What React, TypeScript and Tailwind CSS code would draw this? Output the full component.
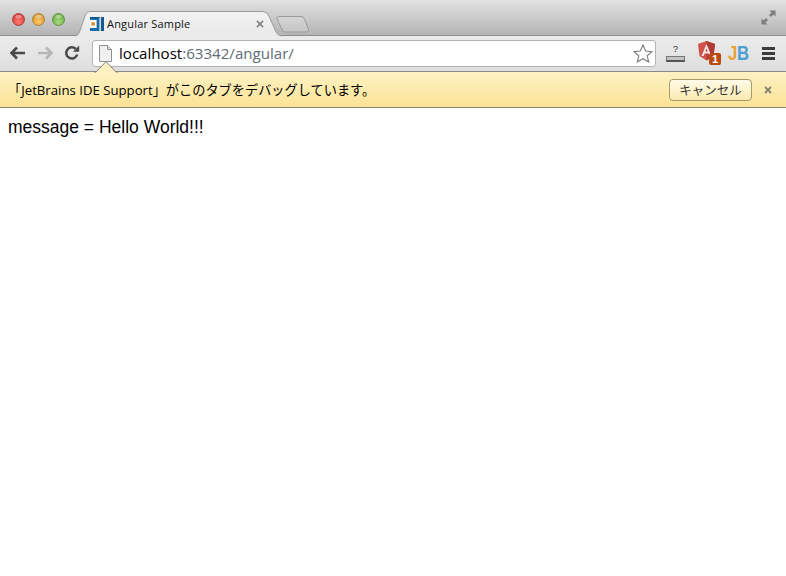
import React from "react";

function Light({ c1, c2, b }: { c1: string; c2: string; b: string }) {
  return (
    <svg width="13" height="13" viewBox="0 0 13 13">
      <defs>
        <radialGradient id={"g" + b.slice(1)} cx="50%" cy="70%" r="60%">
          <stop offset="0%" stopColor={c1} />
          <stop offset="100%" stopColor={c2} />
        </radialGradient>
      </defs>
      <circle cx="6.5" cy="6.5" r="6" fill={"url(#g" + b.slice(1) + ")"} stroke={b} strokeWidth="0.9" />
      <ellipse cx="6.5" cy="3.6" rx="3.2" ry="1.8" fill="#fff" opacity="0.35" />
    </svg>
  );
}

function TabShape() {
  return (
    <svg className="absolute left-[75px] top-[10px]" width="240" height="27" viewBox="0 0 240 27">
      <defs>
        <linearGradient id="tab" x1="0" y1="0" x2="0" y2="1">
          <stop offset="0%" stopColor="#f2f2f2" />
          <stop offset="100%" stopColor="#e9e9e9" />
        </linearGradient>
        <linearGradient id="ntab" x1="0" y1="0" x2="0" y2="1">
          <stop offset="0%" stopColor="#d6d6d6" />
          <stop offset="100%" stopColor="#c4c4c4" />
        </linearGradient>
      </defs>
      <path d="M204 6.5 H226 Q228.5 6.5 229.5 9 L233.5 19.5 Q234.2 22 231.5 22 H210 Q208 22 207 19.5 L202 9 Q201.5 6.5 204 6.5 Z" fill="url(#ntab)" stroke="#9c9c9c" />
      <path d="M0 26 Q3 26 4.5 22 L10 6 Q11 1.5 16 1.5 H188 Q192 1.5 194 6 L201 22 Q203 26 207 26" fill="url(#tab)" stroke="#9a9a9a" />
    </svg>
  );
}

function FavJ() {
  return (
    <svg width="14" height="14" viewBox="0 0 14 14">
      <rect x="0" y="0" width="14" height="14" fill="#fff" />
      <path d="M0 0 H9.5 V14 H0 V11 H6.6 V3 H0 Z" fill="#1a6ca6" />
      <rect x="0" y="0" width="9.5" height="1.2" fill="#0f4f80" />
      <rect x="1.4" y="5.2" width="3.4" height="3.4" fill="#d98a2b" />
      <rect x="10.8" y="0" width="3.2" height="14" fill="#14598f" />
    </svg>
  );
}

function Angular() {
  return (
    <div className="relative w-[26px] h-[26px]">
      <svg className="absolute left-0 top-0" width="19" height="20" viewBox="0 0 18 20">
        <path d="M9 0 L17.5 3 L16 15 L9 19.5 L2 15 L0.5 3 Z" fill="#d0524b" />
        <path d="M9 0 L17.5 3 L16 15 L9 19.5 Z" fill="#b03a34" />
        <path d="M9 3 L4 15 H6 L7 12.4 H11 L12 15 H14 Z M7.8 10.6 L9 7.5 L10.2 10.6 Z" fill="#f6e8e6" fillRule="evenodd" />
      </svg>
      <div className="absolute left-[12px] top-[12px] w-[12px] h-[12px] bg-[#bb4a10] rounded-[2px] text-white text-[11px] font-bold leading-[12px] text-center font-['Liberation_Sans',sans-serif]">
        1
      </div>
    </div>
  );
}

export default function App() {
  return (
    <div className="relative w-[786px] h-[576px] overflow-hidden bg-white flex flex-col font-['Liberation_Sans',sans-serif]">
      <div className="h-[36px] shrink-0 flex items-start justify-between bg-gradient-to-b from-[#e2e2e2] to-[#b4b4b4] border-b border-[#8e8e8e]">
        <div className="flex items-center gap-[7px] pl-[12px] pt-[13px]">
          <Light c1="#ff7a70" c2="#d8423c" b="#a83a36" />
          <Light c1="#ffc864" c2="#d99a34" b="#a87a30" />
          <Light c1="#a8dc7c" c2="#6fb04a" b="#5c9040" />
        </div>
        <svg className="mr-[10px] mt-[10px]" width="15" height="15" viewBox="0 0 16 16" fill="#7d7d7d">
          <path d="M9 0.5 H15.5 V7 L13.2 4.8 L10.6 7.4 L8.6 5.4 L11.2 2.8 Z" />
          <path d="M0.5 15.5 V9 L2.8 11.2 L5.4 8.6 L7.4 10.6 L4.8 13.2 L7 15.5 Z" />
        </svg>
      </div>

      <TabShape />
      <div className="absolute left-[90px] top-[17px] flex items-center gap-[3px] w-[174px]">
        <FavJ />
        <span className="text-[11px] text-[#111] tracking-[0.2px] leading-[14px] font-['Open_Sans',sans-serif]">Angular Sample</span>
        <svg className="ml-auto" width="8" height="8" viewBox="0 0 9 9" stroke="#808080" strokeWidth="1.7">
          <path d="M1 1 L8 8 M8 1 L1 8" />
        </svg>
      </div>

      <div className="h-[36px] shrink-0 flex items-center bg-gradient-to-b from-[#ececec] to-[#dedede] border-b border-[#8a8a8a] pb-[1px]">
        <svg className="ml-[9px]" width="17" height="14" viewBox="0 0 17 14" fill="none" stroke="#4a4a4a" strokeWidth="2.6">
          <path d="M16 7 H3 M8 1.5 L2.5 7 L8 12.5" />
        </svg>
        <svg className="ml-[11px]" width="17" height="14" viewBox="0 0 17 14" fill="none" stroke="#b6b6b6" strokeWidth="2.6">
          <path d="M1 7 H14 M9 1.5 L14.5 7 L9 12.5" />
        </svg>
        <svg className="ml-[10px]" width="16" height="16" viewBox="0 0 16 16" fill="none">
          <path d="M13.2 9.5 A5.6 5.6 0 1 1 11.8 4" stroke="#4a4a4a" strokeWidth="2.5" />
          <path d="M9 6.8 H15.2 V0.6 Z" fill="#4a4a4a" />
        </svg>
        <div className="ml-[12px] w-[564px] h-[27px] bg-white border border-[#b4b4b4] rounded-[3px] flex items-center">
          <svg className="ml-[6px]" width="13" height="17" viewBox="0 0 13 17">
            <path d="M0.5 0.5 H8.5 L12.5 4.5 V16.5 H0.5 Z" fill="#f0f0f0" stroke="#8f8f8f" />
            <path d="M8.5 0.5 V4.5 H12.5" fill="#dcdcdc" stroke="#8f8f8f" />
          </svg>
          <span className="ml-[7px] text-[15.1px] leading-[20px] text-black font-['Open_Sans',sans-serif]">
            localhost<span className="text-[#5f6b75]">:63342/angular/</span>
          </span>
          <svg className="ml-auto mr-[2px]" width="20" height="19" viewBox="0 0 20 19" fill="#fff" stroke="#7c7c7c" strokeWidth="1.1">
            <path d="M10 1 L12.7 7 L19 7.6 L14.2 11.8 L15.7 18 L10 14.7 L4.3 18 L5.8 11.8 L1 7.6 L7.3 7 Z" />
          </svg>
        </div>
        <div className="ml-[10px] w-[19px] h-[18px] flex flex-col items-center justify-end">
          <span className="text-[9px] leading-[10px] text-[#333]">?</span>
          <div className="mt-[2px] w-[19px] h-[6px] bg-[#c4c4c4] border-x border-t border-[#777] border-b-2 border-b-[#555]" />
        </div>
        <div className="ml-[12px] mt-[2px]">
          <Angular />
        </div>
        <div className="ml-[5px] w-[20px] flex items-center text-[21px] leading-[22px] font-bold tracking-[-0.5px] origin-left scale-x-[0.8]">
          <span className="text-[#e8a33a]">J</span>
          <span className="text-[#4d9fd2]">B</span>
        </div>
        <div className="ml-[14px] w-[13px] flex flex-col gap-[2px]">
          <div className="h-[3px] bg-[#3c3c3c]" />
          <div className="h-[3px] bg-[#3c3c3c]" />
          <div className="h-[3px] bg-[#3c3c3c]" />
        </div>
      </div>

      <svg className="absolute left-[94px] top-[60px]" width="24" height="13" viewBox="0 0 24 13">
        <path d="M0 12 H2 L12 1.5 L22 12 H24 V13 H0 Z" fill="#fdf0c0" />
        <path d="M0 12 H2 L12 1.5 L22 12 H24" fill="none" stroke="#7f7f7f" />
      </svg>

      <div className="h-[36px] shrink-0 flex items-center bg-gradient-to-b from-[#fef3c4] to-[#fbe295] border-b border-[#8e8a78]">
        <span className="ml-[8px] pt-[1px] text-[13.2px] leading-[18px] text-black font-['Open_Sans','Noto_Sans_CJK_JP',sans-serif]">
          「JetBrains IDE Support」がこのタブをデバッグしています。
        </span>
        <button className="ml-auto w-[83px] h-[22px] rounded-[4px] border border-[#a89a6c] bg-gradient-to-b from-[#fffbe8] to-[#fbeab0] text-[12.5px] leading-[18px] text-[#333] font-['Noto_Sans_CJK_JP',sans-serif]">
          キャンセル
        </button>
        <svg className="ml-[12px] mr-[14px]" width="8" height="8" viewBox="0 0 8 8" stroke="#85806f" strokeWidth="1.8">
          <path d="M1 1 L7 7 M7 1 L1 7" />
        </svg>
      </div>

      <div className="pl-[8px] pt-[9px] text-[17.5px] leading-[21px] text-black">message = Hello World!!!</div>
    </div>
  );
}
